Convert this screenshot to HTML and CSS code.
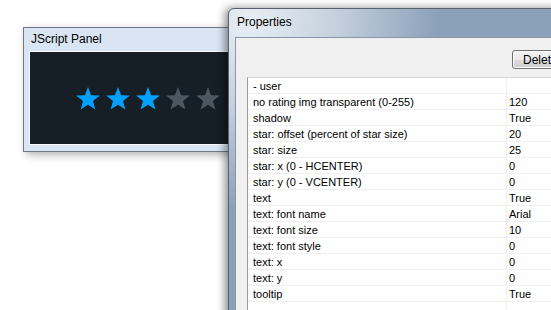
FILE: index.html
```html
<!DOCTYPE html>
<html><head>
  <meta charset="UTF-8">
  <title>JScript Panel - Properties</title>
  <link rel="stylesheet" href="styles.css">
</head><body>
<div id="desk">
  <div class="win panel">
    <div class="cap">JScript Panel</div>
    <div class="inner">
      <div class="stars">
        <svg class="star on" viewBox="0 0 24 23"><polygon points="12,0 15.1,8.2 23.9,8.6 17,14.1 19.4,22.6 12,17.8 4.6,22.6 7,14.1 0.1,8.6 8.9,8.2"/></svg>
        <svg class="star on" viewBox="0 0 24 23"><polygon points="12,0 15.1,8.2 23.9,8.6 17,14.1 19.4,22.6 12,17.8 4.6,22.6 7,14.1 0.1,8.6 8.9,8.2"/></svg>
        <svg class="star on" viewBox="0 0 24 23"><polygon points="12,0 15.1,8.2 23.9,8.6 17,14.1 19.4,22.6 12,17.8 4.6,22.6 7,14.1 0.1,8.6 8.9,8.2"/></svg>
        <svg class="star" viewBox="0 0 24 23"><polygon points="12,0 15.1,8.2 23.9,8.6 17,14.1 19.4,22.6 12,17.8 4.6,22.6 7,14.1 0.1,8.6 8.9,8.2"/></svg>
        <svg class="star" viewBox="0 0 24 23"><polygon points="12,0 15.1,8.2 23.9,8.6 17,14.1 19.4,22.6 12,17.8 4.6,22.6 7,14.1 0.1,8.6 8.9,8.2"/></svg>
      </div>
    </div>
  </div>
  <div class="win props">
    <div class="cap">Properties</div>
    <div class="client">
      <div class="btnrow"><button class="btn">Delete</button></div>
      <div class="list">
        <div class="row"><div class="k">- user</div><div class="v"></div></div>
        <div class="row"><div class="k">no rating img transparent (0-255)</div><div class="v">120</div></div>
        <div class="row"><div class="k">shadow</div><div class="v">True</div></div>
        <div class="row"><div class="k">star: offset (percent of star size)</div><div class="v">20</div></div>
        <div class="row"><div class="k">star: size</div><div class="v">25</div></div>
        <div class="row"><div class="k">star: x (0 - HCENTER)</div><div class="v">0</div></div>
        <div class="row"><div class="k">star: y (0 - VCENTER)</div><div class="v">0</div></div>
        <div class="row"><div class="k">text</div><div class="v">True</div></div>
        <div class="row"><div class="k">text: font name</div><div class="v">Arial</div></div>
        <div class="row"><div class="k">text: font size</div><div class="v">10</div></div>
        <div class="row"><div class="k">text: font style</div><div class="v">0</div></div>
        <div class="row"><div class="k">text: x</div><div class="v">0</div></div>
        <div class="row"><div class="k">text: y</div><div class="v">0</div></div>
        <div class="row"><div class="k">tooltip</div><div class="v">True</div></div>
        <div class="row"><div class="k"></div><div class="v"></div></div>
      </div>
    </div>
  </div>
</div>
</body>
</html>
```
FILE: styles.css
```css
html,body{
  margin:0;
  height:100%;
  background:#fff;
}
#desk{
  position:relative;
  width:551px;
  height:310px;
  overflow:hidden;
  font-family:"Liberation Sans",Arial,sans-serif;
  font-size:12px;
  color:#000;
}
.win{
  position:absolute;
  box-sizing:border-box;
  display:flex;
  flex-direction:column;
}
.panel{
  left:23px;
  top:27px;
  width:250px;
  height:125px;
  border:1px solid #6f7a86;
  background:#d9e5f2;
  padding:0 5px 6px 5px;
  box-shadow:3px 3px 8px rgba(0,0,0,.3);
}
.panel .cap{
  height:23px;
  line-height:23px;
  padding-left:2px;
}
.inner{
  flex:1;
  border:1px solid #f6f9fc;
  background:#161e26;
  display:flex;
  align-items:center;
  justify-content:center;
}
.stars{
  display:flex;
  gap:6px;
}
.star{
  width:24px;
  height:23px;
  display:block;
}
.star polygon{
  fill:#4b5861;
}
.star.on polygon{
  fill:#00a0fc;
}
.props{
  left:228px;
  top:8px;
  width:380px;
  height:330px;
  border:1px solid #56626f;
  border-radius:6px 6px 0 0;
  padding:0 0 0 6px;
  background:
    radial-gradient(ellipse 190px 190px at 20px 10px,rgba(236,241,246,.97),rgba(236,241,246,.6) 45%,rgba(236,241,246,0) 100%),
    #8ba0b9;
  box-shadow:-3px 0 9px rgba(0,0,0,.45);
}
.props .cap{
  height:28px;
  line-height:27px;
  padding-left:2px;
}
.client{
  flex:1;
  background:#f0f0f0;
  border-top:1px solid #8896a8;
  border-left:1px solid #8896a8;
  padding:12px 0 0 11px;
  display:flex;
  flex-direction:column;
  width:350px;
}
.btnrow{
  display:flex;
  padding-left:265px;
  margin-bottom:8px;
}
.btn{
  width:75px;
  height:19px;
  padding:0 0 0 10px;
  text-align:left;
  font:inherit;
  border:1px solid #707070;
  border-radius:3px;
  background:linear-gradient(#f2f2f2 0%,#ebebeb 50%,#dddddd 51%,#cfcfcf 100%);
  box-shadow:inset 0 0 0 1px #fcfcfc;
}
.list{
  flex:1;
  background:#fff;
  border-top:1px solid #d5d5d5;
  border-left:1px solid #9a9a9a;
  font-size:11px;
}
.row{
  display:flex;
  height:16px;
  box-sizing:border-box;
  border-bottom:1px solid #f0f0f0;
  line-height:16px;
}
.k{
  width:259px;
  box-sizing:border-box;
  padding-left:5px;
  border-right:1px solid #f0f0f0;
  white-space:nowrap;
}
.v{
  flex:1;
  padding-left:2px;
}
```
